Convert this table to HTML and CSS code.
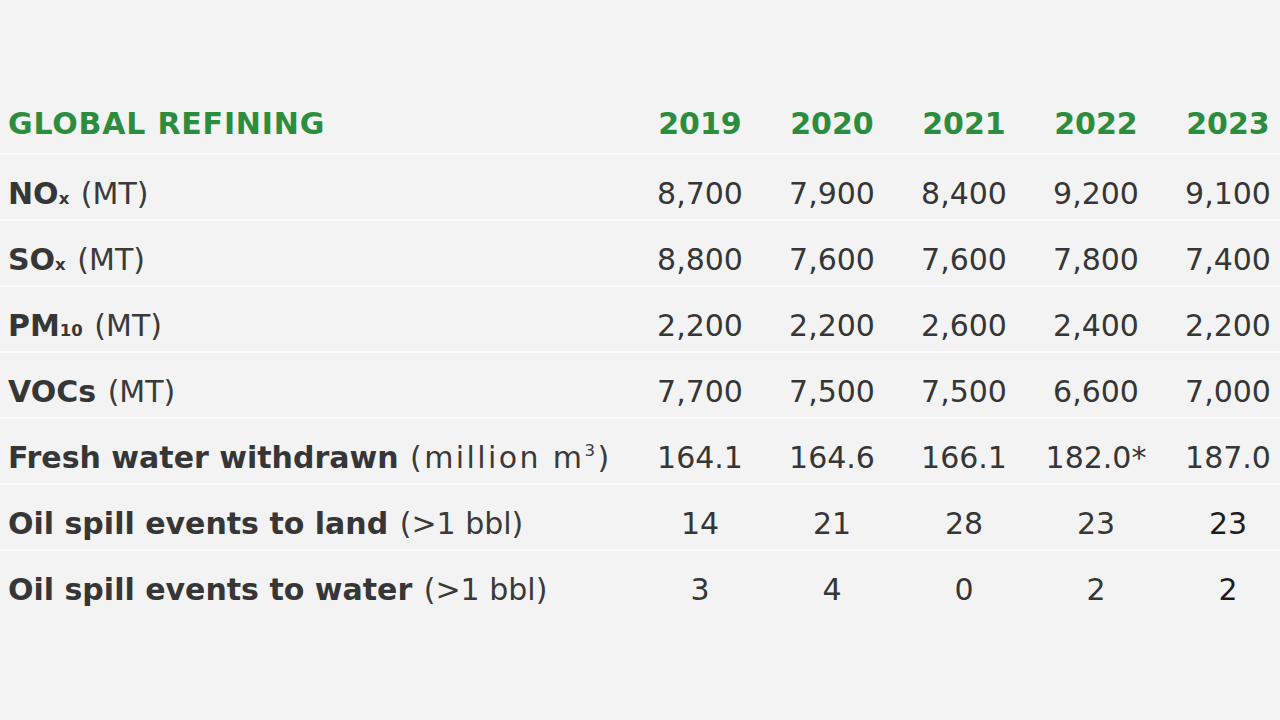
FILE: index.html
```html
<!DOCTYPE html>
<html lang="en">
<head>
<meta charset="utf-8">
<title>Global Refining</title>
<link rel="stylesheet" href="styles.css">
</head>
<body>
<div class="table">
  <div class="row head">
    <div class="label">GLOBAL REFINING</div>
    <div class="cell">2019</div>
    <div class="cell">2020</div>
    <div class="cell">2021</div>
    <div class="cell">2022</div>
    <div class="cell">2023</div>
  </div>
  <div class="row">
    <div class="label"><b>NO<span class="sub">x</span></b> <span class="unit">(MT)</span></div>
    <div class="cell">8,700</div>
    <div class="cell">7,900</div>
    <div class="cell">8,400</div>
    <div class="cell">9,200</div>
    <div class="cell">9,100</div>
  </div>
  <div class="row">
    <div class="label"><b>SO<span class="sub">x</span></b> <span class="unit">(MT)</span></div>
    <div class="cell">8,800</div>
    <div class="cell">7,600</div>
    <div class="cell">7,600</div>
    <div class="cell">7,800</div>
    <div class="cell">7,400</div>
  </div>
  <div class="row">
    <div class="label"><b>PM<span class="sub">10</span></b> <span class="unit">(MT)</span></div>
    <div class="cell">2,200</div>
    <div class="cell">2,200</div>
    <div class="cell">2,600</div>
    <div class="cell">2,400</div>
    <div class="cell">2,200</div>
  </div>
  <div class="row">
    <div class="label"><b>VOCs</b> <span class="unit">(MT)</span></div>
    <div class="cell">7,700</div>
    <div class="cell">7,500</div>
    <div class="cell">7,500</div>
    <div class="cell">6,600</div>
    <div class="cell">7,000</div>
  </div>
  <div class="row">
    <div class="label"><b>Fresh water withdrawn</b> <span class="unit wide">(million m<sup class="sup">3</sup>)</span></div>
    <div class="cell">164.1</div>
    <div class="cell">164.6</div>
    <div class="cell">166.1</div>
    <div class="cell">182.0*</div>
    <div class="cell">187.0</div>
  </div>
  <div class="row">
    <div class="label"><b>Oil spill events to land</b> <span class="unit">(&gt;1 bbl)</span></div>
    <div class="cell">14</div>
    <div class="cell">21</div>
    <div class="cell">28</div>
    <div class="cell">23</div>
    <div class="cell dark">23</div>
  </div>
  <div class="row last">
    <div class="label"><b>Oil spill events to water</b> <span class="unit">(&gt;1 bbl)</span></div>
    <div class="cell">3</div>
    <div class="cell">4</div>
    <div class="cell">0</div>
    <div class="cell">2</div>
    <div class="cell dark">2</div>
  </div>
</div>
</body>
</html>
```
FILE: styles.css
```css
html, body {
  margin: 0;
  padding: 0;
  background: #f3f3f3;
  overflow: hidden;
}
body {
  width: 1280px;
  height: 720px;
  font-family: "DejaVu Sans", "Open Sans", sans-serif;
  color: #363636;
}
.table {
  margin-top: 89px;
  width: 1294px;
}
.row {
  display: grid;
  grid-template-columns: 634px repeat(5, 132px);
  align-items: center;
  box-sizing: content-box;
  padding-top: 12px;
  height: 52px;
  border-bottom: 2px solid #fbfbfb;
  font-size: 30px;
}
.row.head {
  padding-top: 5px;
  height: 59px;
  color: #2b8d3d;
  font-weight: 700;
}
.row.head .label {
  letter-spacing: 0.8px;
}
.row.last {
  border-bottom: none;
}
.label {
  padding-left: 8px;
  white-space: nowrap;
}
.label b {
  font-weight: 700;
}
.unit {
  font-weight: 400;
  color: #3a3a3a;
  margin-left: 2px;
}
.unit.wide {
  letter-spacing: 2.4px;
}
.sub {
  font-size: 0.55em;
  font-weight: 700;
}
.sup {
  font-size: 0.55em;
  vertical-align: 0.7em;
  line-height: 0;
}
.cell {
  text-align: center;
  white-space: nowrap;
}
.cell.dark {
  color: #1c1c1c;
}
```
